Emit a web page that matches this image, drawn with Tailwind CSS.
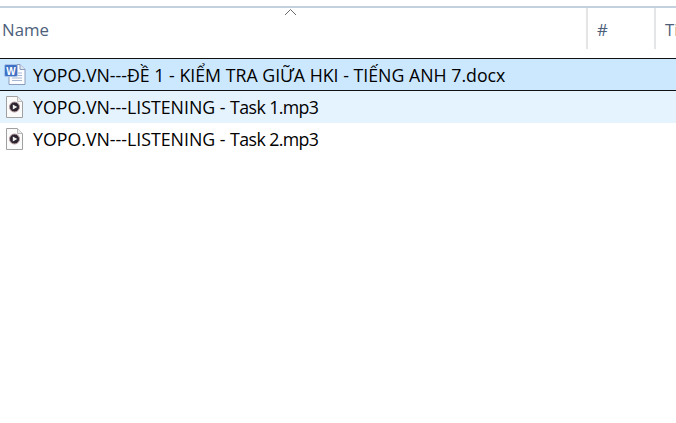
<!DOCTYPE html>
<html><head><meta charset="utf-8"><script src="https://cdn.jsdelivr.net/npm/@tailwindcss/browser@4"></script></head>
<body class="bg-white overflow-hidden">
<div class="w-[676px] h-[423px] bg-white overflow-hidden font-['Open_Sans','Noto_Sans',sans-serif] text-[17.75px] text-black">
  <div class="h-[6px]"></div>
  <div class="h-[2px] bg-[#c3d0de]"></div>
  <div class="relative flex h-[41px] text-[#4c607a] text-[16.8px]">
    <svg class="absolute left-[284px] top-[0px]" width="13" height="8" viewBox="0 0 13 8" fill="none" stroke="#6b6b6b"><path d="M1 7 L6.500 1.500 L12 7"/></svg>
    <div class="w-[588px] shrink-0 border-r-2 border-[#e3e5e7] pl-[2px] pt-[11px] leading-[22px]">Name</div>
    <div class="w-[68px] shrink-0 border-r-2 border-[#e3e5e7] pl-[9px] pt-[11px] leading-[22px]">#</div>
    <div class="shrink-0 pl-[9px] pt-[11px] leading-[22px]">Ti</div>
  </div>
  <div class="h-[9px]"></div>
  <div class="flex items-center h-[33px] bg-[#cce8ff] border-y border-[#111]">
    <svg class="ml-[3px] w-[24px] h-[24px] shrink-0" viewBox="0 0 24 24"><path d="M6 1.500H17L22 6.500V21.500H6Z" fill="#fdfdff" stroke="#8a9cbc"/><path d="M17 1.500V6.500H22" fill="#dfe6f2" stroke="#8a9cbc"/><path d="M9 10H19M9 12.500H19M9 15H19M9 17.500H19" stroke="#a5b6d2"/><rect x="1.500" y="1.500" width="13" height="12" rx="1.500" fill="#3f72c4" stroke="#a9c2e8"/><text x="8" y="11.500" text-anchor="middle" font-family="Liberation Sans" font-size="10" font-weight="700" fill="#fff">W</text></svg>
    <span class="ml-[6px] whitespace-nowrap leading-[24px] relative top-[0.5px]">YOPO.VN---ĐỀ 1 - KIỂM TRA GIỮA HKI - TIẾNG ANH 7.docx</span>
  </div>
  <div class="flex items-center h-[32px] bg-[#e5f3ff]">
    <svg class="ml-[3px] w-[24px] h-[24px] shrink-0" viewBox="0 0 24 24"><path d="M3.500 1.500H14.500L19.500 6.500V22.500H3.500Z" fill="#fbfbfb" stroke="#a0a0a0"/><path d="M14.500 1.500V6.500H19.500" fill="#ececec" stroke="#b8b8b8"/><circle cx="11.500" cy="12" r="5" fill="#2a2430" stroke="#b89a9c"/><path d="M9.800 9.500L14.300 12L9.800 14.500Z" fill="#f4f0ec"/></svg>
    <span class="ml-[6px] whitespace-nowrap leading-[24px]">YOPO.VN---LISTENING - <span class="tracking-[-0.6px]">Task 1.mp3</span></span>
  </div>
  <div class="flex items-center h-[32px]">
    <svg class="ml-[3px] w-[24px] h-[24px] shrink-0" viewBox="0 0 24 24"><path d="M3.500 1.500H14.500L19.500 6.500V22.500H3.500Z" fill="#fbfbfb" stroke="#a0a0a0"/><path d="M14.500 1.500V6.500H19.500" fill="#ececec" stroke="#b8b8b8"/><circle cx="11.500" cy="12" r="5" fill="#2a2430" stroke="#b89a9c"/><path d="M9.800 9.500L14.300 12L9.800 14.500Z" fill="#f4f0ec"/></svg>
    <span class="ml-[6px] whitespace-nowrap leading-[24px]">YOPO.VN---LISTENING - <span class="tracking-[-0.6px]">Task 2.mp3</span></span>
  </div>
</div>
</body></html>
